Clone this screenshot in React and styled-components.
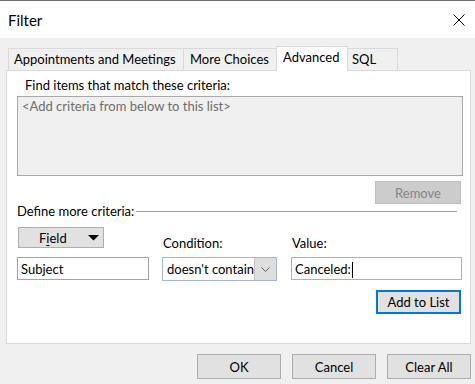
import React from "react";
import styled, { createGlobalStyle } from "styled-components";

const FONT = `"Lato", "Liberation Sans", sans-serif`;

const Global = createGlobalStyle`
  html, body { margin: 0; padding: 0; background: #f0f0f0; }
  body { font-family: ${FONT}; font-size: 13px; color: #000; }
  * { box-sizing: border-box; }
`;

const Window = styled.div`
  width: 475px;
  height: 384px;
  display: flex;
  flex-direction: column;
  background: #f0f0f0;
  overflow: hidden;
`;

const TitleBar = styled.div`
  height: 38px;
  flex: none;
  background: #fff;
  border-top: 1px solid #6f6f6f;
  display: flex;
  align-items: center;
  justify-content: space-between;
  padding: 0 10px 0 8px;
`;

const Title = styled.div`
  font-size: 15px;
  line-height: 20px;
  margin-top: 1px;
`;

const CloseIcon = styled.svg`
  width: 12px;
  height: 12px;
  display: block;
  margin-top: 0px;
`;

const Body = styled.div`
  flex: 1;
  display: flex;
  flex-direction: column;
  padding: 8px 4px 0 6px;
`;

const TabStrip = styled.div`
  display: flex;
  align-items: flex-end;
  height: 24px;
  padding-left: 2px;
`;

const Tab = styled.div`
  position: relative;
  width: ${(p) => p.$w}px;
  height: ${(p) => (p.$active ? 25 : 22)}px;
  margin-bottom: ${(p) => (p.$active ? -1 : 0)}px;
  margin-left: ${(p) => (p.$first ? 0 : -1)}px;
  z-index: ${(p) => (p.$active ? 2 : 1)};
  background: ${(p) => (p.$active ? "#fff" : "#f0f0f0")};
  border: 1px solid #d9d9d9;
  border-bottom: none;
  padding: 2px 0 0 ${(p) => p.$pl}px;
  line-height: 16px;
  white-space: nowrap;
`;

const Panel = styled.div`
  height: 274px;
  background: #fff;
  border: 1px solid #d9d9d9;
  padding: 6px 7px 0 10px;
  display: flex;
  flex-direction: column;
`;

const FindLabel = styled.div`
  line-height: 16px;
  margin-left: 8px;
`;

const ListBox = styled.div`
  margin-top: 3px;
  height: 80px;
  background: #f0f0f0;
  border: 1px solid #a9a9a9;
  padding: 1px 4px;
  color: #6d6d6d;
  line-height: 16px;
`;

const RightRow = styled.div`
  display: flex;
  justify-content: flex-end;
  margin-top: ${(p) => p.$mt}px;
  padding-right: 2px;
`;

const Button = styled.button`
  font-family: ${FONT};
  font-size: 13px;
  width: ${(p) => p.$w}px;
  height: ${(p) => p.$h}px;
  background: ${(p) => (p.$disabled ? "#cccccc" : "#e1e1e1")};
  color: ${(p) => (p.$disabled ? "#858585" : "#000")};
  border: ${(p) =>
    p.$default ? "2px solid #0078d7" : p.$disabled ? "1px solid #bfbfbf" : "1px solid #adadad"};
  border-radius: 0;
  padding: 0;
  margin: 0;
  line-height: 16px;
  display: flex;
  align-items: center;
  justify-content: center;
`;

const SectionHeader = styled.div`
  display: flex;
  align-items: center;
  height: 14px;
  line-height: 14px;
`;

const Rule = styled.div`
  flex: 1;
  height: 1px;
  background: #a0a0a0;
  margin: 1px 6px 0 2px;
`;

const CriteriaGrid = styled.div`
  margin-top: 9px;
  display: grid;
  grid-template-columns: 132px 116px 171px;
  grid-template-rows: 30px 24px;
  column-gap: 13px;
  align-items: start;
`;

const FieldButton = styled.button`
  font-family: ${FONT};
  font-size: 13px;
  margin-left: 1px;
  width: 86px;
  height: 21px;
  background: #e1e1e1;
  border: 1px solid #adadad;
  border-radius: 0;
  padding: 0 0 0 20px;
  display: flex;
  align-items: center;
  gap: 21px;
  line-height: 16px;
  color: #000;
`;

const Underline = styled.span`
  text-decoration: underline;
  text-underline-offset: 2px;
`;

const ArrowDown = styled.svg`
  width: 11px;
  height: 6px;
  display: block;
  margin-top: 1px;
`;

const FieldLabel = styled.div`
  margin-top: 8px;
  padding-left: 1px;
  line-height: 16px;
`;

const TextBox = styled.div`
  height: 23px;
  background: #fff;
  border: 1px solid ${(p) => (p.$focus ? "#94b6e3" : "#a5a5a5")};
  padding: 2px 3px 0;
  line-height: 17px;
  white-space: nowrap;
  display: flex;
  align-items: center;
`;

const Caret = styled.span`
  display: inline-block;
  width: 1px;
  height: 16px;
  background: #000;
  margin-left: 1px;
`;

const Combo = styled.div`
  width: 115px;
  height: 24px;
  background: #fff;
  border: 1px solid #a4b6d2;
  display: flex;
`;

const ComboText = styled.div`
  flex: 1;
  overflow: hidden;
  white-space: nowrap;
  padding: 3px 0 0 4px;
  line-height: 16px;
`;

const ComboButton = styled.div`
  width: 22px;
  height: 22px;
  background: #dedede;
  border-left: 1px solid #c3c3c3;
  display: flex;
  align-items: center;
  justify-content: center;
`;

const Footer = styled.div`
  display: flex;
  justify-content: flex-end;
  gap: 11px;
  margin-top: 10px;
`;

export default function App() {
  return (
    <Window>
      <Global />
      <TitleBar>
        <Title>Filter</Title>
        <CloseIcon viewBox="0 0 12 12">
          <path d="M0.5 0.5 L11.5 11.5 M11.5 0.5 L0.5 11.5" stroke="#000" strokeWidth="1" fill="none" />
        </CloseIcon>
      </TitleBar>
      <Body>
        <TabStrip>
          <Tab $first $w={176} $pl={5}>Appointments and Meetings</Tab>
          <Tab $w={94} $pl={6}>More Choices</Tab>
          <Tab $active $w={72} $pl={6}>Advanced</Tab>
          <Tab $w={51} $pl={4}>SQL</Tab>
        </TabStrip>
        <Panel>
          <FindLabel>Find items that match these criteria:</FindLabel>
          <ListBox>&lt;Add criteria from below to this list&gt;</ListBox>
          <RightRow $mt={5}>
            <Button $w={86} $h={23} $disabled>Remove</Button>
          </RightRow>
          <SectionHeader>
            <span>Define more criteria:</span>
            <Rule />
          </SectionHeader>
          <CriteriaGrid>
            <FieldButton>
              <span>F<Underline>i</Underline>eld</span>
              <ArrowDown viewBox="0 0 11 6">
                <path d="M0 0 H11 L5.5 5.5 Z" fill="#000" />
              </ArrowDown>
            </FieldButton>
            <FieldLabel>Condition:</FieldLabel>
            <FieldLabel>Value:</FieldLabel>
            <TextBox>Subject</TextBox>
            <Combo>
              <ComboText>doesn't contain</ComboText>
              <ComboButton>
                <svg width="9" height="5" viewBox="0 0 9 5">
                  <path d="M0.5 0.5 L4.5 4.5 L8.5 0.5" stroke="#606060" strokeWidth="1" fill="none" />
                </svg>
              </ComboButton>
            </Combo>
            <TextBox $focus>
              Canceled:<Caret />
            </TextBox>
          </CriteriaGrid>
          <RightRow $mt={9}>
            <Button $w={85} $h={24} $default>Add to List</Button>
          </RightRow>
        </Panel>
        <Footer>
          <Button $w={84} $h={25}>OK</Button>
          <Button $w={84} $h={25}>Cancel</Button>
          <Button $w={84} $h={25}>Clear All</Button>
        </Footer>
      </Body>
    </Window>
  );
}
